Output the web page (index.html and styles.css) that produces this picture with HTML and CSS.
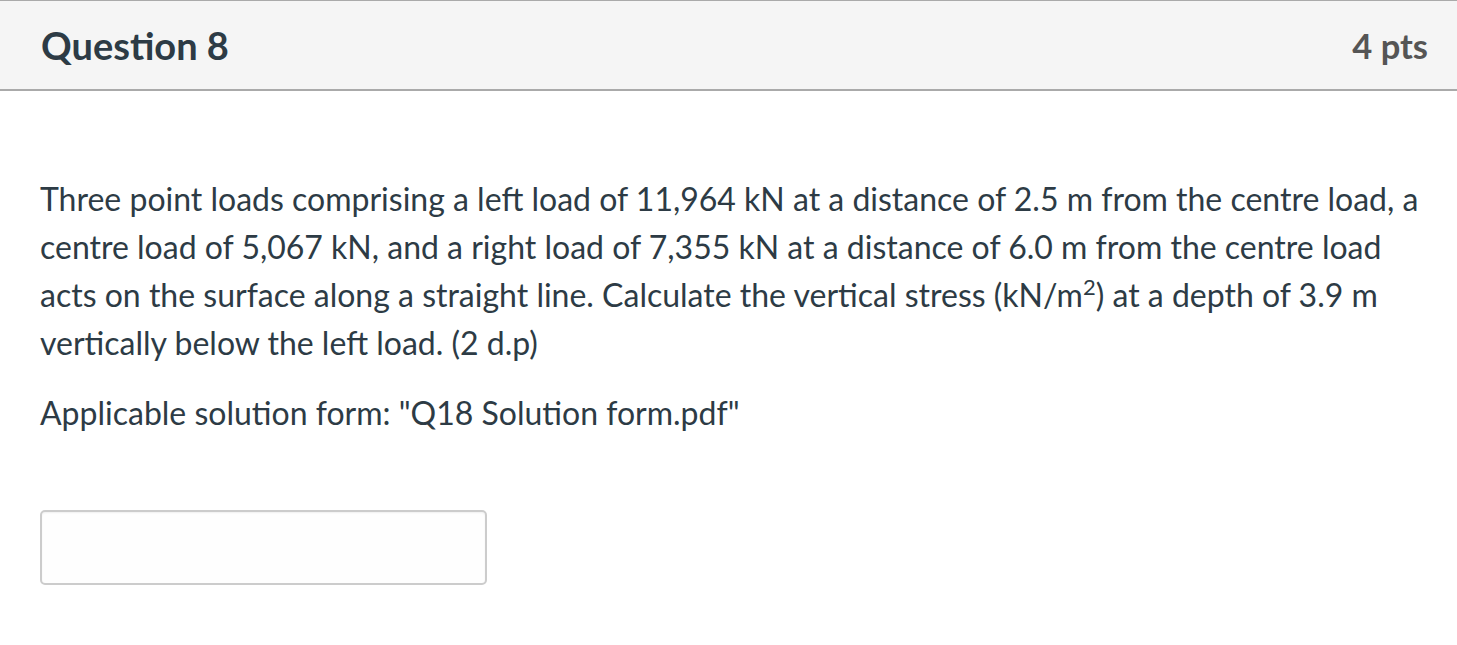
FILE: index.html
```html
<!DOCTYPE html>
<html>
<head>
<meta charset="utf-8">
<link rel="stylesheet" href="styles.css">
</head>
<body>
<div class="question">
  <div class="header">
    <span class="title">Question 8</span>
    <span class="pts">4 pts</span>
  </div>
  <div class="content">
    <p class="text">Three point loads comprising a left load of 11,964 kN at a distance of 2.5 m from the centre load, a centre load of 5,067 kN, and a right load of 7,355 kN at a distance of 6.0 m from the centre load acts on the surface along a straight line. Calculate the vertical stress (kN/m<sup>2</sup>) at a depth of 3.9 m vertically below the left load. (2 d.p)</p>
    <p class="text">Applicable solution form: "Q18 Solution form.pdf"</p>
    <div class="answer"><input class="box" type="text"></div>
  </div>
</div>
</body>
</html>
```
FILE: styles.css
```css
html, body {
  margin: 0;
  padding: 0;
  background: #ffffff;
}
body {
  font-family: Lato, "Open Sans", sans-serif;
  color: #2d3b45;
}
.header {
  display: flex;
  justify-content: space-between;
  align-items: center;
  height: 88px;
  background: #f5f5f5;
  border-top: 1px solid #aaaaaa;
  border-bottom: 2px solid #aaaaaa;
  padding: 0 29px 0 41px;
}
.title {
  font-size: 38px;
  font-weight: 700;
  color: #2d3b45;
}
.pts {
  font-size: 34.5px;
  font-weight: 700;
  color: #555555;
}
.content {
  padding: 84px 20px 0 40px;
}
.text {
  font-size: 32px;
  line-height: 48px;
  margin: 0 0 22px 0;
}
.text sup {
  font-size: 22px;
  line-height: 0;
}
.answer {
  padding-top: 51px;
}
.box {
  display: block;
  box-sizing: border-box;
  width: 447px;
  height: 75px;
  margin: 0;
  border: 2px solid #cccccc;
  border-radius: 5px;
  background: #fefefe;
  box-shadow: inset 0 1px 2px rgba(0,0,0,0.06);
}
```
